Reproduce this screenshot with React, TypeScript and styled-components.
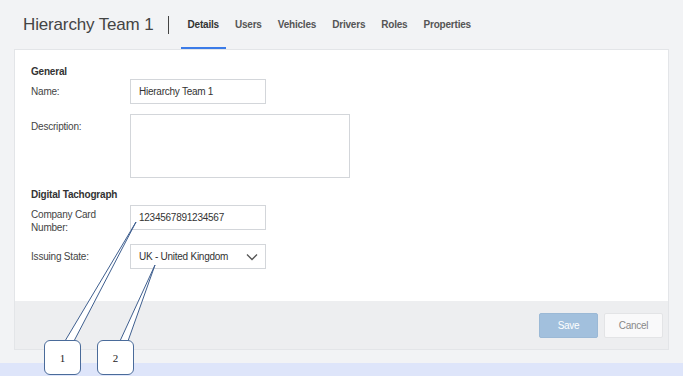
import styled, { createGlobalStyle } from "styled-components";

const GlobalStyle = createGlobalStyle`
  html, body {
    margin: 0;
    padding: 0;
    background: #f2f3f5;
    font-family: "Liberation Sans", Arial, sans-serif;
  }
`;

const tabs = ["Details", "Users", "Vehicles", "Drivers", "Roles", "Properties"];

export default function App() {
  return (
    <>
      <GlobalStyle />
      <Page>
        <Header>
          <Title>Hierarchy Team 1</Title>
          <Divider />
          <TabList>
            {tabs.map((t) => (
              <Tab key={t} $active={t === "Details"}>
                {t}
              </Tab>
            ))}
          </TabList>
        </Header>

        <Panel>
          <Body>
            <SectionTitle $after={1}>General</SectionTitle>
            <Row>
              <Label>Name:</Label>
              <Input $width={136}>Hierarchy Team 1</Input>
            </Row>
            <Row>
              <Label>Description:</Label>
              <TextArea />
            </Row>

            <SectionTitle $after={4}>Digital Tachograph</SectionTitle>
            <Row>
              <Label $tight>
                Company Card
                <br />
                Number:
              </Label>
              <Input $width={136}>1234567891234567</Input>
            </Row>
            <Row>
              <Label>Issuing State:</Label>
              <Select>
                <span>UK - United Kingdom</span>
                <svg width="12" height="8" viewBox="0 0 12 8">
                  <path d="M1 1.5 L6 6.5 L11 1.5" fill="none" stroke="#555" strokeWidth="1.3" />
                </svg>
              </Select>
            </Row>
          </Body>
          <Footer>
            <Button $primary>Save</Button>
            <Button>Cancel</Button>
          </Footer>
        </Panel>

        <BottomBand />

        <Tails width="683" height="376" viewBox="0 0 683 376">
          <polygon points="65,341 136,222 74,341" fill="#fff" stroke="#3f5f8f" strokeWidth="1" />
          <polygon points="120,341 155,265 128,341" fill="#fff" stroke="#3f5f8f" strokeWidth="1" />
        </Tails>
        <Callout $left={44}>1</Callout>
        <Callout $left={97}>2</Callout>
      </Page>
    </>
  );
}

const Page = styled.div`
  position: relative;
  width: 683px;
  height: 376px;
  overflow: hidden;
  display: flex;
  flex-direction: column;
`;

const Header = styled.div`
  height: 49px;
  display: flex;
  align-items: center;
  padding-left: 23px;
  flex-shrink: 0;
`;

const Title = styled.div`
  font-size: 17px;
  color: #444;
  letter-spacing: -0.15px;
`;

const Divider = styled.div`
  width: 1px;
  height: 18px;
  background: #444;
  margin: 0 12px 0 14px;
`;

const TabList = styled.div`
  display: flex;
  height: 100%;
  gap: 2px;
`;

const Tab = styled.div<{ $active?: boolean }>`
  display: flex;
  align-items: center;
  padding: 2px 7px 0;
  font-size: 10px;
  font-weight: bold;
  letter-spacing: -0.2px;
  color: ${(p) => (p.$active ? "#333" : "#555")};
  border-bottom: 2px solid ${(p) => (p.$active ? "#3b7be8" : "transparent")};
`;

const Panel = styled.div`
  margin: 0 14px;
  border: 1px solid #e3e5e8;
  background: #fff;
  display: flex;
  flex-direction: column;
`;

const Body = styled.div`
  height: 251px;
  box-sizing: border-box;
  padding: 15px 0 0 16px;
`;

const SectionTitle = styled.div<{ $after: number }>`
  font-size: 10px;
  font-weight: bold;
  letter-spacing: -0.2px;
  line-height: 13px;
  color: #333;
  margin-bottom: ${(p) => p.$after}px;
`;

const Row = styled.div`
  display: flex;
  align-items: flex-start;
  margin-bottom: 10px;
`;

const Label = styled.div<{ $tight?: boolean }>`
  width: 99px;
  flex-shrink: 0;
  padding-top: ${(p) => (p.$tight ? 3 : 6)}px;
  font-size: 10px;
  line-height: 13px;
  letter-spacing: -0.2px;
  color: #444;
`;

const Input = styled.div<{ $width: number }>`
  width: ${(p) => p.$width}px;
  height: 25px;
  box-sizing: border-box;
  border: 1px solid #d3d6da;
  padding-left: 8px;
  display: flex;
  align-items: center;
  font-size: 10px;
  letter-spacing: -0.25px;
  color: #333;
`;

const TextArea = styled.div`
  width: 220px;
  height: 64px;
  box-sizing: border-box;
  border: 1px solid #d3d6da;
`;

const Select = styled(Input).attrs({ $width: 136 })`
  justify-content: space-between;
  padding-right: 7px;
`;

const Footer = styled.div`
  height: 48px;
  box-sizing: border-box;
  background: #edeef0;
  display: flex;
  justify-content: flex-end;
  align-items: flex-start;
  gap: 6px;
  padding: 12px 5px 0 0;
`;

const Button = styled.div<{ $primary?: boolean }>`
  width: 59px;
  height: 25px;
  box-sizing: border-box;
  border-radius: 2px;
  display: flex;
  align-items: center;
  justify-content: center;
  font-size: 10px;
  letter-spacing: -0.3px;
  color: ${(p) => (p.$primary ? "#fff" : "#888")};
  background: ${(p) => (p.$primary ? "#a2c0dd" : "#f9f9fa")};
  border: 1px solid ${(p) => (p.$primary ? "#9bb9d6" : "#e3e4e6")};
`;

const BottomBand = styled.div`
  margin-top: auto;
  height: 13px;
  background: #dee5fa;
`;

const Tails = styled.svg`
  position: absolute;
  left: 0;
  top: 0;
  pointer-events: none;
`;

const Callout = styled.div<{ $left: number }>`
  position: absolute;
  left: ${(p) => p.$left}px;
  top: 340px;
  width: 37px;
  height: 35px;
  box-sizing: border-box;
  border: 1.5px solid #4a6b9a;
  border-radius: 6px;
  background: #fff;
  display: flex;
  align-items: center;
  justify-content: center;
  font-family: "Liberation Serif", serif;
  font-size: 11px;
  color: #222;
`;
